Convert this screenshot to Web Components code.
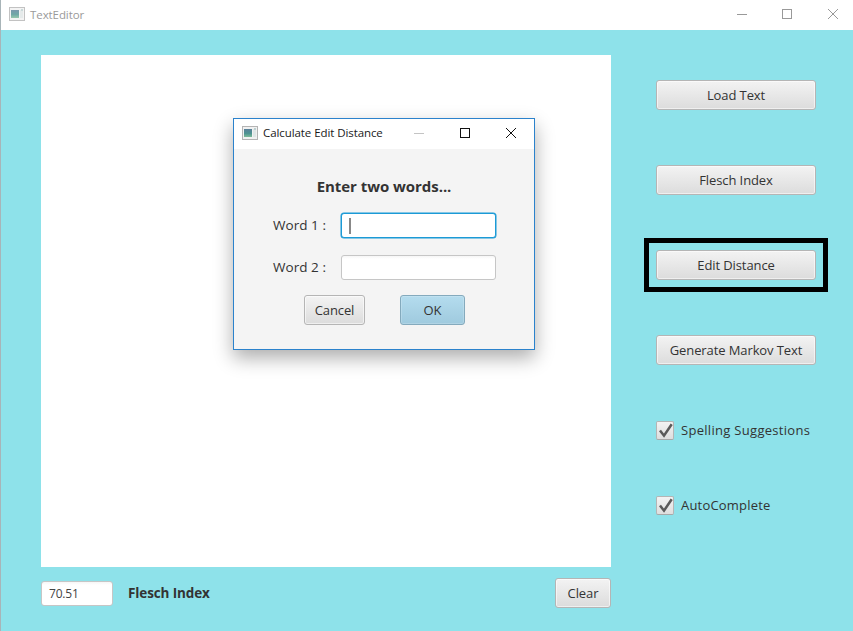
<!DOCTYPE html>
<html lang="en"><head><meta charset="utf-8"><title>TextEditor</title>
<style>
html,body{margin:0;padding:0;background:#8ee2ea}
body{width:853px;height:631px;overflow:hidden;font-family:"Open Sans","Noto Sans","Liberation Sans",sans-serif;color:#333}
</style></head><body>
<te-app>
  <te-titlebar slot="title" label="TextEditor" inactive></te-titlebar>
  <te-textarea slot="editor"></te-textarea>
  <te-field slot="score" value="70.51" w="72" h="25"></te-field>
  <b slot="scorelabel">Flesch Index</b>
  <te-button slot="clear" w="56">Clear</te-button>
  <te-button slot="side">Load Text</te-button>
  <te-button slot="side">Flesch Index</te-button>
  <te-button slot="side">Edit Distance</te-button>
  <te-button slot="side">Generate Markov Text</te-button>
  <te-checkbox slot="checks" style="letter-spacing:.3px">Spelling Suggestions</te-checkbox>
  <te-checkbox slot="checks" style="letter-spacing:.2px">AutoComplete</te-checkbox>
  <te-highlight slot="overlay"></te-highlight>
  <te-dialog slot="overlay"></te-dialog>
</te-app>
<script>
const ICON=(o)=>`<svg width="16" height="14" viewBox="0 0 16 14" style="display:block;flex:none;margin-top:-3px;opacity:${o}"><defs><linearGradient id="g" x1="0" y1="0" x2="0" y2="1"><stop offset="0" stop-color="#5a7f99"/><stop offset=".55" stop-color="#4d9291"/><stop offset="1" stop-color="#7dbb98"/></linearGradient></defs><rect x=".5" y=".5" width="15" height="13" fill="#f1f1f1" stroke="#b4b4b4"/><rect x="2" y="3" width="8" height="8" fill="url(#g)"/><rect x="11" y="3" width="3" height="8" fill="#dfe6e6"/><rect x="12" y="2" width="2" height="2" fill="#bcd0d0"/></svg>`;
function def(name,html,init){customElements.define(name,class extends HTMLElement{connectedCallback(){if(this.shadowRoot)return;const r=this.attachShadow({mode:'open'});r.innerHTML=typeof html==='function'?html(this):html;init&&init(this,r);}})}

def('te-app',`<style>
:host{display:flex;flex-direction:column;position:relative;width:853px;height:631px;box-sizing:border-box;border-left:1px solid #a8b4b8;background:#8ee2ea}
.main{flex:1;display:flex;padding:25px 0 0 40px}
.left{width:570px;display:flex;flex-direction:column}
.bottom{display:flex;align-items:center;margin-top:11px;height:30px}
::slotted(b){font:700 13.5px "Open Sans",sans-serif;color:#333;margin-left:15px;flex:1;letter-spacing:-.12px}
.right{margin-left:45px;width:160px;padding-top:25px;display:flex;flex-direction:column}
.btns{display:flex;flex-direction:column;gap:55px}
.checks{display:flex;flex-direction:column;gap:54px;margin-top:55px}
</style>
<slot name="title"></slot>
<div class="main">
 <div class="left"><slot name="editor"></slot>
  <div class="bottom"><slot name="score"></slot><slot name="scorelabel"></slot><slot name="clear"></slot></div>
 </div>
 <div class="right"><div class="btns"><slot name="side"></slot></div><div class="checks"><slot name="checks"></slot></div></div>
</div>
<slot name="overlay"></slot>`);

def('te-titlebar',el=>{const ina=el.hasAttribute('inactive');const dlg=el.hasAttribute('dialog');
 const c=ina?'#999':'#111';const mc=ina?'#999':'#c4c4c4';
 const w=dlg?46:45;
 const ox=dlg?[0,0,0]:[-1,-1,-2];
 const vb=i=>`${ox[i]} 0 ${w} 30`;
 return `<style>
:host{display:flex;align-items:center;height:30px;background:#fff;box-sizing:border-box;padding-left:8px}
.t{margin-left:5px;font:11.5px/14px "Open Sans",sans-serif;color:${ina?'#9a9a9a':'#1a1a1a'};flex:1;letter-spacing:-.08px;white-space:nowrap;padding-bottom:${dlg?3:1}px}
.w{display:flex}
.b{display:block;width:${w}px;height:30px}
</style>${ICON(ina?.8:1)}<span class="t">${el.getAttribute('label')}</span>
<div class="w">
<svg class="b" viewBox="${vb(0)}" fill="none" stroke="${mc}"><path d="M18 14.5h10"/></svg>
<svg class="b" viewBox="${vb(1)}" fill="none" stroke="${c}"><rect x="18.5" y="9.5" width="9" height="9"/></svg>
<svg class="b" viewBox="${vb(2)}" fill="none" stroke="${c}"><path d="M18 9l10 10M28 9l-10 10"/></svg>
</div>`});

def('te-textarea',`<style>:host{display:block;height:512px;background:#fff}</style>`);

def('te-button',el=>{const w=el.getAttribute('w');const d=el.hasAttribute('default');return `<style>
:host{display:inline-flex;align-items:center;justify-content:center;box-sizing:border-box;width:${w?w+'px':'100%'};height:30px;border:1px solid ${d?'#84aabd':'#b5b5b5'};border-radius:3px;
background:linear-gradient(${d?'#b4dcee,#9fcade':'#f3f3f3,#dcdcdc'});box-shadow:inset 0 0 0 1px ${d?'rgba(255,255,255,.18)':'rgba(255,255,255,.55)'};
font:13px "Open Sans",sans-serif;color:#333;white-space:nowrap;letter-spacing:-.1px}
</style><slot></slot>`});

def('te-checkbox',`<style>
:host{display:flex;align-items:center;height:21px;font:13px/18px "Open Sans",sans-serif;color:#333;white-space:nowrap}
.box{width:18px;height:19px;box-sizing:border-box;border:1px solid #b5b5b5;border-bottom-color:#a8a8a8;border-radius:2px;background:linear-gradient(#f3f3f3,#dedede);margin-right:7px;flex:none}
svg{display:block}
span{padding-bottom:1px}
</style><div class="box"><svg width="16" height="17" viewBox="0 0 16 17"><path d="M3 8.5l4 5.2L14.7 2.3" fill="none" stroke="#5a5a5a" stroke-width="2.5"/></svg></div><span><slot></slot></span>`);

def('te-field',el=>{const f=el.hasAttribute('focused');const w=el.getAttribute('w'),h=el.getAttribute('h');const v=el.getAttribute('value')||'';return `<style>
:host{display:flex;align-items:center;box-sizing:border-box;width:${w}px;height:${h}px;background:linear-gradient(#f6f6f6,#fff 3px);border:1px solid ${f?'#1b9ad6':'#c6c6c6'};border-radius:3px;padding-left:7px;font:12px "Open Sans",sans-serif;color:#444;letter-spacing:-.2px;flex:none;${f?'box-shadow:0 0 0 .5px #1b9ad6;background:#fff;':''}}
i{display:block;width:2px;height:16px;background:#888}
</style>${f?'<i></i>':''}<span>${v}</span>`});

def('te-highlight',`<style>:host{position:absolute;left:643px;top:238px;width:184px;height:54px;box-sizing:border-box;border:5px solid #000;pointer-events:none}</style>`);

def('te-dialog',`<style>
:host{position:absolute;left:232px;top:118px;width:302px;height:232px;box-sizing:border-box;border:1px solid #2b82cc;background:#f4f4f4;box-shadow:0 8px 18px rgba(0,0,0,.32);display:flex;flex-direction:column;font-family:"Open Sans",sans-serif;color:#333}
.body{flex:1;display:flex;flex-direction:column;align-items:center;padding-top:27px}
h2{margin:0;font:700 15px/20px "Open Sans",sans-serif;color:#333;letter-spacing:-.05px}
.grid{display:grid;grid-template-columns:68px 155px;row-gap:17px;align-items:center;margin-top:17px;margin-left:1px}
label{font:13.5px "Open Sans",sans-serif;letter-spacing:.05px;white-space:nowrap;padding-bottom:1px}
.acts{display:flex;gap:35px;margin-top:15px;margin-left:1px}
</style>
<te-titlebar label="Calculate Edit Distance" dialog></te-titlebar>
<div class="body"><h2>Enter two words...</h2>
<div class="grid"><label>Word 1 :</label><te-field w="155" h="25" focused></te-field><label>Word 2 :</label><te-field w="155" h="25"></te-field></div>
<div class="acts"><te-button w="61">Cancel</te-button><te-button w="65" default>OK</te-button></div>
</div>`);
</script>
</body></html>
